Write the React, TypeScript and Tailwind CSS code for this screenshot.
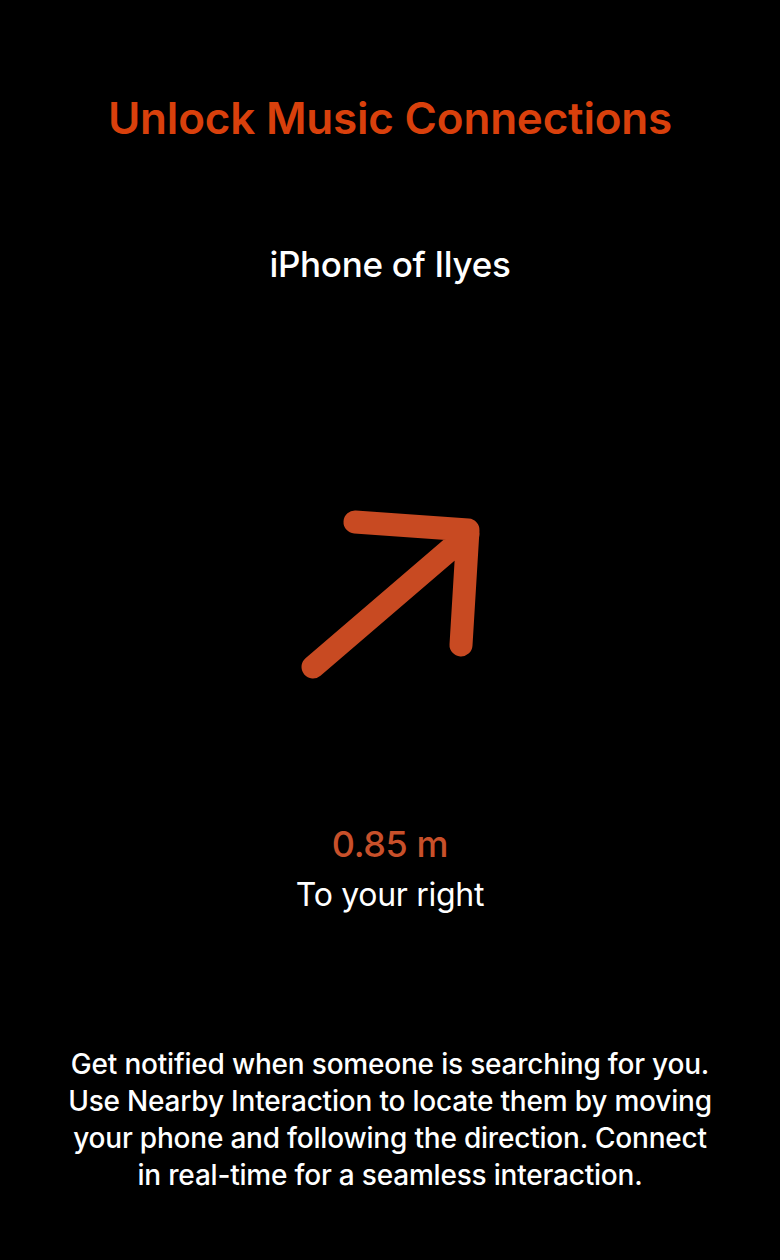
import React from "react";

export default function App() {
  return (
    <div
      className="w-[780px] h-[1260px] bg-black flex flex-col items-center"
      style={{ fontFamily: "Inter, 'Noto Sans', sans-serif" }}
    >
      <h1 className="mt-[92px] h-[52px] leading-[52px] text-[44px] font-semibold tracking-[-0.2px] text-[#d9400c]">
        Unlock Music Connections
      </h1>
      <div className="mt-[100px] h-[40px] leading-[40px] text-[35px] font-medium tracking-[-0.3px] text-white">
        iPhone of Ilyes
      </div>
      <svg
        className="mt-[210px]"
        width="200"
        height="200"
        viewBox="0 0 200 200"
        fill="none"
      >
        <path
          d="M23 173 L178 40 M65 28 L178 36 L171 151"
          stroke="#c84a22"
          strokeWidth="23"
          strokeLinecap="round"
          strokeLinejoin="round"
        />
      </svg>
      <div className="mt-[130px] h-[40px] leading-[40px] text-[36px] font-medium tracking-[-0.4px] text-[#c8502a]">
        0.85 m
      </div>
      <div className="mt-[11px] h-[40px] leading-[40px] text-[32px] font-normal tracking-[-0.3px] text-white">
        To your right
      </div>
      <p className="mt-[131px] w-[720px] text-center text-[28px] leading-[37px] font-medium tracking-[-0.2px] text-white">
        Get notified when someone is searching for you.
        <br />
        Use Nearby Interaction to locate them by moving
        <br />
        your phone and following the direction. Connect
        <br />
        in real-time for a seamless interaction.
      </p>
    </div>
  );
}
